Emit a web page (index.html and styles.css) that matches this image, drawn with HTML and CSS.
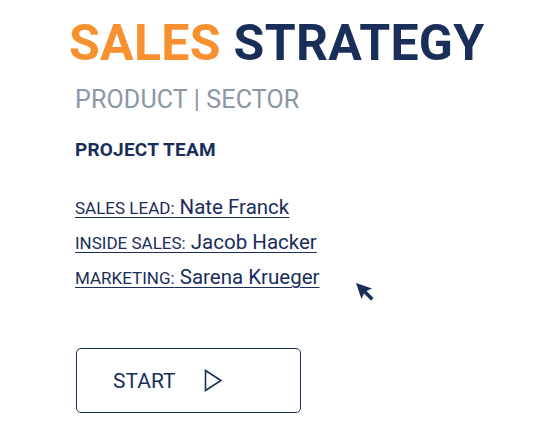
FILE: index.html
```html
<!DOCTYPE html>
<html>
<head>
<meta charset="utf-8">
<link rel="stylesheet" href="styles.css">
</head>
<body>
<div class="page">
  <h1 class="title"><span class="accent">SALES</span> STRATEGY</h1>
  <div class="subtitle">PRODUCT | SECTOR</div>
  <h2 class="team-head">PROJECT TEAM</h2>
  <ul class="team">
    <li><a class="member"><span class="role">SALES LEAD:</span> Nate Franck</a></li>
    <li><a class="member"><span class="role">INSIDE SALES:</span> Jacob Hacker</a></li>
    <li class="last"><a class="member"><span class="role">MARKETING:</span> Sarena Krueger</a>
      <svg class="cursor" width="20" height="20" viewBox="0 0 20 20"><path d="M1 1 L17 6.5 L11.5 9 L18.5 16 L16 18.5 L9 11.5 L6.5 17 Z" fill="#1a2e5a"/></svg>
    </li>
  </ul>
  <button class="start">START
    <svg class="play" width="19" height="23" viewBox="0 0 19 23"><path d="M1.5 1.5 L17 11.5 L1.5 21.5 Z" fill="none" stroke="#1a2e5a" stroke-width="1.6" stroke-linejoin="miter"/></svg>
  </button>
</div>
</body>
</html>
```
FILE: styles.css
```css
html, body { margin: 0; padding: 0; background: #fff; }
body { font-family: Roboto, "Open Sans", sans-serif; color: #1a2e5a; }
.page { padding: 15px 0 0 75px; }
.title {
  margin: 0 0 0 -6px;
  font-size: 50px;
  font-weight: 700;
  letter-spacing: 0.3px;
  line-height: 56px;
  color: #1a2e5a;
}
.accent { color: #f7902f; }
.subtitle {
  margin-top: 15px;
  font-size: 25px;
  letter-spacing: 0.15px;
  color: #8b96a6;
  line-height: 28px;
  font-weight: 400;
}
.team-head {
  margin: 25px 0 0;
  font-size: 19px;
  letter-spacing: 0.2px;
  font-weight: 700;
  line-height: 22px;
}
.team { list-style: none; margin: 35px 0 0; padding: 0; }
.team li { height: 35px; line-height: 22px; display: flex; align-items: flex-start; }
.member {
  color: #1a2e5a;
  font-size: 20.5px;
  text-decoration: underline;
  text-decoration-thickness: 1px;
  text-underline-offset: 3px;
}
.role { font-size: 17px; }
.last { position: relative; }
.cursor { position: absolute; left: 280px; top: 16px; }
.start {
  margin-top: 47px;
  width: 225px;
  height: 65px;
  border: 1.5px solid #1a2e5a;
  border-radius: 5px;
  background: #fff;
  color: #1a2e5a;
  font-family: Roboto, sans-serif;
  font-size: 21px;
  display: flex;
  align-items: center;
  padding: 0 0 0 36px;
  gap: 28px;
  box-sizing: border-box;
  margin-left: 1px;
}
.play { display: block; }
```
